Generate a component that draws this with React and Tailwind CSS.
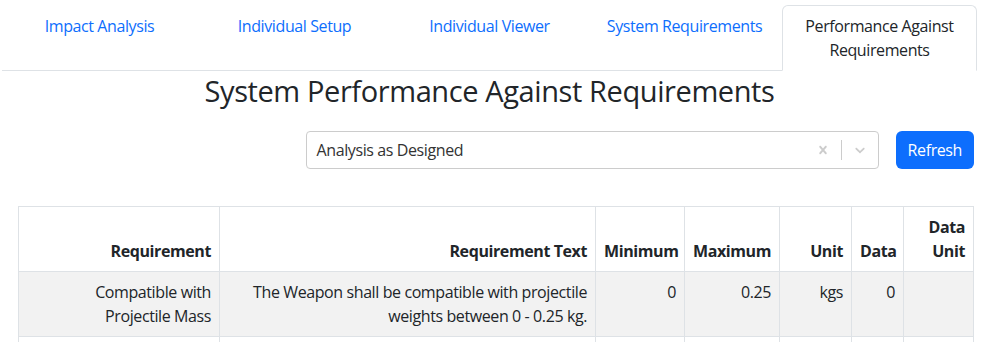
import { useState } from "react";

const tabs = [
  "Impact Analysis",
  "Individual Setup",
  "Individual Viewer",
  "System Requirements",
  "Performance Against Requirements",
];

const columns = [
  { label: "Requirement", w: "w-[201px]" },
  { label: "Requirement Text", w: "w-[376px]" },
  { label: "Minimum", w: "w-[89px]" },
  { label: "Maximum", w: "w-[95px]" },
  { label: "Unit", w: "w-[72px]" },
  { label: "Data", w: "w-[52px]" },
  { label: "Data Unit", w: "w-[70px]" },
];

const rows = [
  [
    "Compatible with Projectile Mass",
    "The Weapon shall be compatible with projectile weights between 0 - 0.25 kg.",
    "0",
    "0.25",
    "kgs",
    "0",
    "",
  ],
];

function Tabs({ active, onSelect }) {
  return (
    <ul className="mt-[5px] flex border-b border-[#dee2e6]">
      {tabs.map((t, i) => (
        <li key={t} className="-mb-px flex-1">
          <button
            onClick={() => onSelect(i)}
            className={
              i === active
                ? "w-full rounded-t-[6px] border border-[#dee2e6] border-b-white bg-white px-4 py-2 text-center text-[#212529]"
                : "w-full border border-transparent px-4 py-2 text-center text-[#0d6efd]"
            }
          >
            {t}
          </button>
        </li>
      ))}
    </ul>
  );
}

export default function App() {
  const [active, setActive] = useState(4);

  return (
    <div className="min-h-[342px] bg-white font-['Open_Sans',sans-serif] text-[16px] leading-6 tracking-[-0.4px] text-[#212529]">
      <div className="ml-[2px] w-[975px]">
        <Tabs active={active} onSelect={setActive} />

        <h2 className="mt-[2px] text-center text-[29px] leading-9 tracking-[-0.4px]">
          System Performance Against Requirements
        </h2>

        <div className="mt-[22px] flex items-center justify-end pr-[3px]">
          <div className="flex h-[38px] w-[573px] items-center rounded-[4px] border border-[#cccccc] bg-white">
            <span className="flex-1 pl-[10px] text-[#333333]">Analysis as Designed</span>
            <span className="flex h-full items-center px-[10px] text-[#cccccc]">
              <svg width="16" height="16" viewBox="0 0 20 20" fill="currentColor">
                <path d="M14.348 14.849c-0.469 0.469-1.229 0.469-1.697 0l-2.651-3.030-2.651 3.029c-0.469 0.469-1.229 0.469-1.697 0-0.469-0.469-0.469-1.229 0-1.697l2.758-3.15-2.759-3.152c-0.469-0.469-0.469-1.228 0-1.697s1.228-0.469 1.697 0l2.652 3.031 2.651-3.031c0.469-0.469 1.228-0.469 1.697 0s0.469 1.229 0 1.697l-2.758 3.152 2.758 3.15c0.469 0.469 0.469 1.229 0 1.698z" />
              </svg>
            </span>
            <span className="h-[20px] w-px bg-[#cccccc]" />
            <span className="flex h-full items-center px-[10px] text-[#cccccc]">
              <svg width="16" height="16" viewBox="0 0 20 20" fill="currentColor">
                <path d="M4.516 7.548c0.436-0.446 1.043-0.481 1.576 0l3.908 3.747 3.908-3.747c0.533-0.481 1.141-0.446 1.574 0 0.436 0.445 0.408 1.197 0 1.615-0.406 0.418-4.695 4.502-4.695 4.502-0.217 0.223-0.502 0.335-0.787 0.335s-0.57-0.112-0.789-0.335c0 0-4.287-4.084-4.695-4.502s-0.436-1.17 0-1.615z" />
              </svg>
            </span>
          </div>
          <button className="ml-[17px] h-[38px] rounded-[6px] bg-[#0d6efd] px-3 text-white">
            Refresh
          </button>
        </div>

        <table className="ml-[16px] mt-[37px] w-[956px] table-fixed border-collapse border border-[#dee2e6]">
          <colgroup>
            {columns.map((c) => (
              <col key={c.label} className={c.w} />
            ))}
          </colgroup>
          <thead>
            <tr>
              {columns.map((c) => (
                <th
                  key={c.label}
                  className="border border-[#dee2e6] p-2 text-right align-bottom font-bold"
                >
                  {c.label === "Data Unit" ? (
                    <>
                      Data
                      <br />
                      Unit
                    </>
                  ) : (
                    c.label
                  )}
                </th>
              ))}
            </tr>
          </thead>
          <tbody>
            {rows.map((r, i) => (
              <tr key={i} className="bg-[#f2f2f2]">
                {r.map((cell, j) => (
                  <td key={j} className="border border-[#dee2e6] p-2 text-right align-top">
                    {cell}
                  </td>
                ))}
              </tr>
            ))}
            <tr>
              {columns.map((c) => (
                <td key={c.label} className="h-[40px] border border-[#dee2e6] p-2" />
              ))}
            </tr>
          </tbody>
        </table>
      </div>
    </div>
  );
}
